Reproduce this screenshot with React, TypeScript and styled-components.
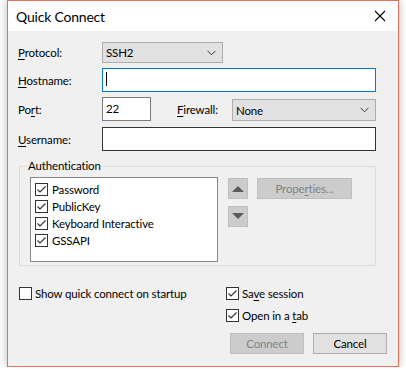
import React from "react";
import styled, { createGlobalStyle } from "styled-components";

const Global = createGlobalStyle`
  html, body { margin: 0; padding: 0; background: #ffffff; }
  body {
    font-family: Lato, "Noto Sans", "Liberation Sans", sans-serif;
    font-size: 11.5px;
    letter-spacing: -0.15px;
    color: #000;
  }
  * { box-sizing: border-box; }
`;

const Window = styled.div`
  margin-left: 7px;
  width: 392px;
  height: 367px;
  border: 1px solid #e2705f;
  background: #f0f0f0;
  box-shadow: 0 0 9px rgba(0, 0, 0, 0.28);
  display: flex;
  flex-direction: column;
`;

const TitleBar = styled.div`
  height: 30px;
  background: #ffffff;
  display: flex;
  align-items: center;
  justify-content: space-between;
  padding: 0 12px 0 8px;
`;

const Title = styled.div`
  font-size: 14px;
  letter-spacing: -0.2px;
  color: #000;
`;

const Close = styled.svg`
  width: 12px;
  height: 12px;
`;

const Body = styled.div`
  display: flex;
  flex-direction: column;
  padding: 11px 22px 0 10px;
`;

const Row = styled.div<{ $h: number; $mt?: number }>`
  display: flex;
  align-items: center;
  height: ${(p) => p.$h}px;
  margin-top: ${(p) => p.$mt ?? 0}px;
`;

const Label = styled.div<{ $w: number }>`
  width: ${(p) => p.$w}px;
  flex: none;
  white-space: nowrap;
`;

const Select = styled.div<{ $w?: number; $grow?: boolean }>`
  height: 100%;
  width: ${(p) => (p.$w ? `${p.$w}px` : "auto")};
  flex: ${(p) => (p.$grow ? "1" : "none")};
  background: #e1e1e1;
  border: 1px solid #adadad;
  display: flex;
  align-items: center;
  justify-content: space-between;
  padding: 0 6px 0 3px;
`;

const Input = styled.div<{ $w?: number; $border: string; $grow?: boolean }>`
  height: 100%;
  width: ${(p) => (p.$w ? `${p.$w}px` : "auto")};
  flex: ${(p) => (p.$grow ? "1" : "none")};
  background: #ffffff;
  border: 1px solid ${(p) => p.$border};
  display: flex;
  align-items: center;
  padding: 0 4px 2px 3px;
`;

const Caret = styled.div`
  width: 1px;
  height: 14px;
  background: #000;
`;

const FirewallSlot = styled.div`
  display: flex;
  align-items: flex-end;
  height: 100%;
  flex: 1;
  margin-left: 26px;
`;

const FirewallLabel = styled(Label)`
  align-self: center;
`;

const FirewallSelect = styled(Select)`
  height: 22px;
`;

const Group = styled.fieldset`
  margin: 7px 0 0 1px;
  padding: 0;
  border: 1px solid #dcdcdc;
  min-width: 0;
`;

const Legend = styled.legend`
  margin-left: 7px;
  padding: 0 1px;
  line-height: 16px;
`;

const GroupContent = styled.div`
  display: flex;
  align-items: flex-start;
  padding: 3px 0 3px 10px;
`;

const ListBox = styled.div`
  width: 188px;
  height: 85px;
  background: #ffffff;
  border: 1px solid #828790;
  padding: 3px 0 0 4px;
  display: flex;
  flex-direction: column;
`;

const ListItem = styled.div`
  display: flex;
  align-items: center;
  height: 17px;
  gap: 4px;
  white-space: nowrap;
`;

const ArrowCol = styled.div`
  display: flex;
  flex-direction: column;
  gap: 7px;
  margin-left: 10px;
  padding-top: 1px;
`;

const SmallButton = styled.div`
  width: 20px;
  height: 21px;
  background: #cccccc;
  border: 1px solid #bfbfbf;
  display: flex;
  align-items: center;
  justify-content: center;
`;

const Button = styled.div<{ $w: number; $disabled?: boolean }>`
  width: ${(p) => p.$w}px;
  height: 21px;
  flex: none;
  background: ${(p) => (p.$disabled ? "#cccccc" : "#e1e1e1")};
  border: 1px solid ${(p) => (p.$disabled ? "#bfbfbf" : "#adadad")};
  color: ${(p) => (p.$disabled ? "#838383" : "#000")};
  display: flex;
  align-items: center;
  justify-content: center;
  padding-bottom: 1px;
`;

const PropsButton = styled(Button)`
  margin-left: 9px;
  margin-top: 1px;
`;

const Bottom = styled.div`
  display: flex;
  padding: 19px 11px 0 11px;
`;

const LeftCol = styled.div`
  flex: none;
  width: 207px;
`;

const RightCol = styled.div`
  flex: 1;
  display: flex;
  flex-direction: column;
  gap: 6px;
`;

const CheckRow = styled.div`
  display: flex;
  align-items: center;
  height: 16px;
  gap: 3px;
  white-space: nowrap;
`;

const Buttons = styled.div`
  display: flex;
  justify-content: flex-end;
  gap: 9px;
  margin-top: 4px;
`;

const Box = styled.div`
  width: 13px;
  height: 13px;
  flex: none;
  background: #ffffff;
  border: 1px solid #333333;
  display: flex;
  align-items: center;
  justify-content: center;
`;

const Check = ({ on }: { on: boolean }) => (
  <Box>
    {on && (
      <svg width="11" height="11" viewBox="0 0 11 11">
        <path d="M1.5 5.5 L4 8 L9.5 2.5" fill="none" stroke="#333" strokeWidth="1.2" />
      </svg>
    )}
  </Box>
);

const Chevron = () => (
  <svg width="9" height="6" viewBox="0 0 9 6">
    <path d="M0.5 0.8 L4.5 4.8 L8.5 0.8" fill="none" stroke="#333" strokeWidth="1" />
  </svg>
);

const U = styled.span`
  text-decoration: underline;
  text-underline-offset: 2px;
`;

export default function App() {
  return (
    <>
      <Global />
      <Window>
        <TitleBar>
          <Title>Quick Connect</Title>
          <Close viewBox="0 0 12 12">
            <path d="M1 1 L11 11 M11 1 L1 11" stroke="#000" strokeWidth="1.1" />
          </Close>
        </TitleBar>
        <Body>
          <Row $h={21}>
            <Label $w={84}>
              <U>P</U>rotocol:
            </Label>
            <Select $w={121}>
              <span>SSH2</span>
              <Chevron />
            </Select>
          </Row>
          <Row $h={24} $mt={5}>
            <Label $w={84}>
              <U>H</U>ostname:
            </Label>
            <Input $border="#0078d7" $grow>
              <Caret />
            </Input>
          </Row>
          <Row $h={24} $mt={5}>
            <Label $w={84}>
              Po<U>r</U>t:
            </Label>
            <Input $border="#7a7a7a" $w={49}>
              22
            </Input>
            <FirewallSlot>
              <FirewallLabel $w={55}>
                <U>F</U>irewall:
              </FirewallLabel>
              <FirewallSelect $grow>
                <span>None</span>
                <Chevron />
              </FirewallSelect>
            </FirewallSlot>
          </Row>
          <Row $h={24} $mt={6}>
            <Label $w={84}>
              <U>U</U>sername:
            </Label>
            <Input $border="#333333" $grow />
          </Row>
          <Group>
            <Legend>Authentication</Legend>
            <GroupContent>
              <ListBox>
                {["Password", "PublicKey", "Keyboard Interactive", "GSSAPI"].map((t) => (
                  <ListItem key={t}>
                    <Check on />
                    <span>{t}</span>
                  </ListItem>
                ))}
              </ListBox>
              <ArrowCol>
                <SmallButton>
                  <svg width="12" height="7" viewBox="0 0 12 7">
                    <path d="M0 7 L6 1 L12 7 Z" fill="#5a5a5a" />
                  </svg>
                </SmallButton>
                <SmallButton>
                  <svg width="12" height="7" viewBox="0 0 12 7">
                    <path d="M0 0 L6 6 L12 0 Z" fill="#5a5a5a" />
                  </svg>
                </SmallButton>
              </ArrowCol>
              <PropsButton $w={95} $disabled>
                <span>
                  Prope<U>r</U>ties...
                </span>
              </PropsButton>
            </GroupContent>
          </Group>
        </Body>
        <Bottom>
          <LeftCol>
            <CheckRow>
              <Check on={false} />
              <span>Show quick connect on startup</span>
            </CheckRow>
          </LeftCol>
          <RightCol>
            <CheckRow>
              <Check on />
              <span>
                Sa<U>v</U>e session
              </span>
            </CheckRow>
            <CheckRow>
              <Check on />
              <span>
                Open in a <U>t</U>ab
              </span>
            </CheckRow>
            <Buttons>
              <Button $w={74} $disabled>
                Connect
              </Button>
              <Button $w={74}>Cancel</Button>
            </Buttons>
          </RightCol>
        </Bottom>
      </Window>
    </>
  );
}
